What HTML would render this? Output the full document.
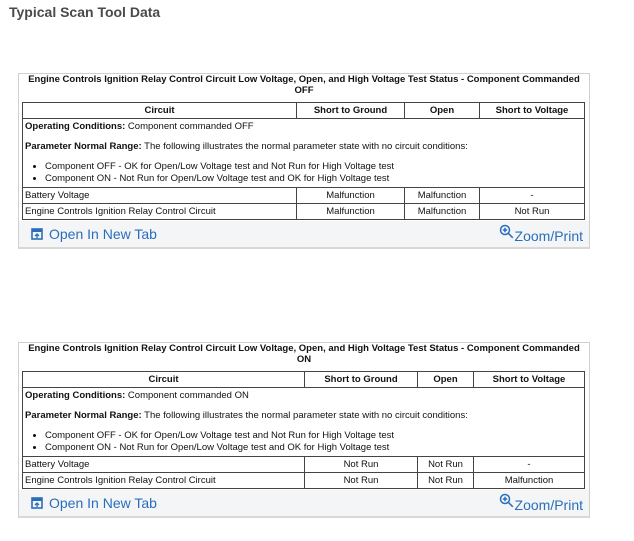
<!DOCTYPE html>
<html><head><style>
body{margin:0;width:634px;height:541px;background:#fff;font-family:"Liberation Sans",Arial,sans-serif;position:relative;overflow:hidden}
.h{position:absolute;left:9px;top:4px;font-size:14px;font-weight:bold;color:#4a4a4a}
.box{position:absolute;left:18px;width:570px;border:1px solid #d0d0d0;border-bottom:2px solid #d8d8d8;background:#f4f5f7}
.top{background:#fff;padding:1px 3px 1px 3px}
.cap{font-size:9.5px;font-weight:bold;text-align:center;line-height:10.5px;color:#111;padding:0 4px 6px}
table{border-collapse:collapse;width:563px;font-size:9.5px;color:#111;border:1.5px solid #333}
td,th{border:1px solid #444;padding:0 2px;height:15px;line-height:14px}
th{font-weight:bold;text-align:center}
td.c{text-align:center}
.cond{font-size:9.5px;line-height:12px;padding:2px 2px 2px}
.cond p{margin:0 0 8px}
.cond ul{margin:0;padding-left:20px}
.cond li{line-height:12px}
.foot{height:26px;position:relative;color:#2a6ebb;font-size:14px}
.l{position:absolute;left:12px;top:5px}
.r{position:absolute;right:6px;top:3px}
</style></head><body>
<div class="h">Typical Scan Tool Data</div>

<div class="box" style="top:73px">
<div class="top">
<div class="cap">Engine Controls Ignition Relay Control Circuit Low Voltage, Open, and High Voltage Test Status - Component Commanded OFF</div>
<table>
<tr><th style="width:269px">Circuit</th><th style="width:103px">Short to Ground</th><th style="width:70px">Open</th><th>Short to Voltage</th></tr>
<tr><td colspan="4" class="cond"><p><b>Operating Conditions:</b> Component commanded OFF</p><p><b>Parameter Normal Range:</b> The following illustrates the normal parameter state with no circuit conditions:</p><ul><li>Component OFF - OK for Open/Low Voltage test and Not Run for High Voltage test</li><li>Component ON - Not Run for Open/Low Voltage test and OK for High Voltage test</li></ul></td></tr>
<tr><td>Battery Voltage</td><td class="c">Malfunction</td><td class="c">Malfunction</td><td class="c">-</td></tr>
<tr><td>Engine Controls Ignition Relay Control Circuit</td><td class="c">Malfunction</td><td class="c">Malfunction</td><td class="c">Not Run</td></tr>
</table></div>
<div class="foot"><span class="l"><svg width="12" height="12" viewBox="0 0 12 12" style="vertical-align:-1px;margin-right:6px"><rect x="1" y="1" width="10" height="10" fill="none" stroke="#2a6ebb" stroke-width="1.6"/><rect x="1" y="1" width="10" height="3" fill="#2a6ebb"/><path d="M6 10V6M4 8l2-2 2 2" stroke="#2a6ebb" fill="none" stroke-width="1.3"/></svg>Open In New Tab</span><span class="r"><svg width="15" height="15" viewBox="0 0 15 15" style="vertical-align:2px;margin-right:1px"><circle cx="6" cy="6" r="4.5" fill="none" stroke="#2a6ebb" stroke-width="1.5"/><path d="M9.3 9.3l4.5 4.5M6 3.8v4.4M3.8 6h4.4" stroke="#2a6ebb" stroke-width="1.5"/></svg>Zoom/Print</span></div>
</div>

<div class="box" style="top:342px">
<div class="top">
<div class="cap">Engine Controls Ignition Relay Control Circuit Low Voltage, Open, and High Voltage Test Status - Component Commanded ON</div>
<table>
<tr><th style="width:277px">Circuit</th><th style="width:108px">Short to Ground</th><th style="width:51px">Open</th><th>Short to Voltage</th></tr>
<tr><td colspan="4" class="cond"><p><b>Operating Conditions:</b> Component commanded ON</p><p><b>Parameter Normal Range:</b> The following illustrates the normal parameter state with no circuit conditions:</p><ul><li>Component OFF - OK for Open/Low Voltage test and Not Run for High Voltage test</li><li>Component ON - Not Run for Open/Low Voltage test and OK for High Voltage test</li></ul></td></tr>
<tr><td>Battery Voltage</td><td class="c">Not Run</td><td class="c">Not Run</td><td class="c">-</td></tr>
<tr><td>Engine Controls Ignition Relay Control Circuit</td><td class="c">Not Run</td><td class="c">Not Run</td><td class="c">Malfunction</td></tr>
</table></div>
<div class="foot"><span class="l"><svg width="12" height="12" viewBox="0 0 12 12" style="vertical-align:-1px;margin-right:6px"><rect x="1" y="1" width="10" height="10" fill="none" stroke="#2a6ebb" stroke-width="1.6"/><rect x="1" y="1" width="10" height="3" fill="#2a6ebb"/><path d="M6 10V6M4 8l2-2 2 2" stroke="#2a6ebb" fill="none" stroke-width="1.3"/></svg>Open In New Tab</span><span class="r"><svg width="15" height="15" viewBox="0 0 15 15" style="vertical-align:2px;margin-right:1px"><circle cx="6" cy="6" r="4.5" fill="none" stroke="#2a6ebb" stroke-width="1.5"/><path d="M9.3 9.3l4.5 4.5M6 3.8v4.4M3.8 6h4.4" stroke="#2a6ebb" stroke-width="1.5"/></svg>Zoom/Print</span></div>
</div>
</body></html>
